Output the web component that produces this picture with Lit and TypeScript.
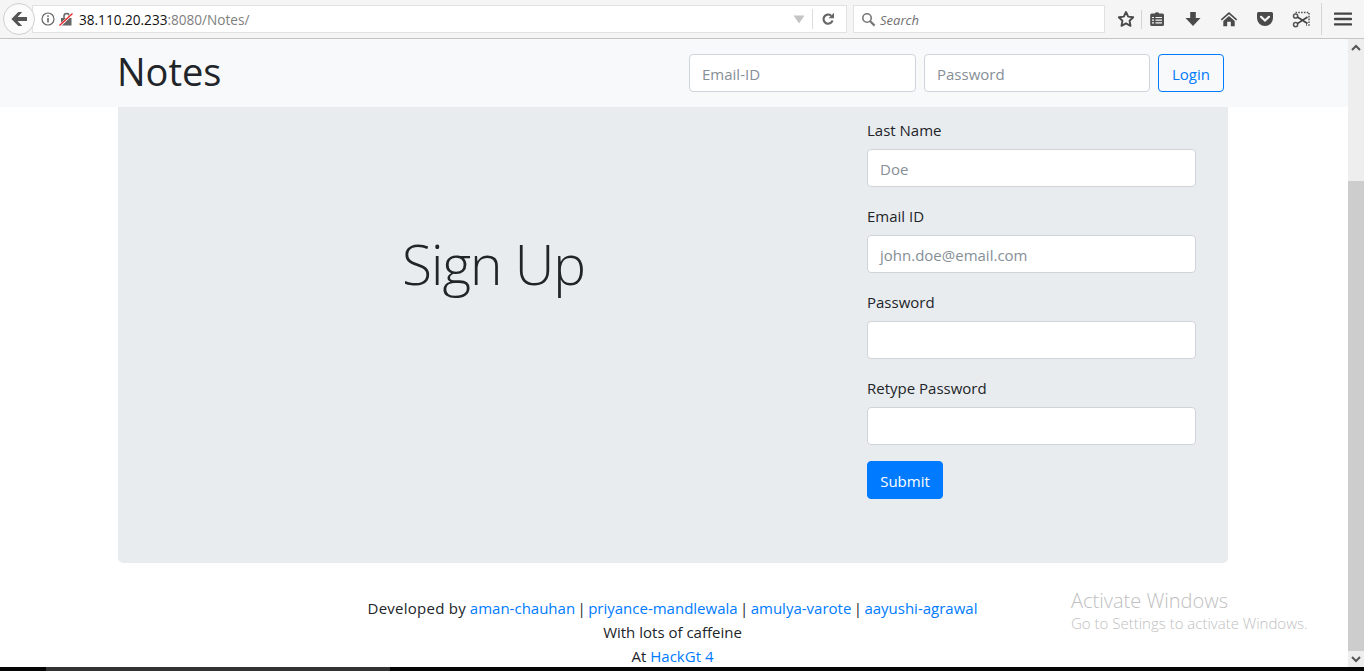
import { LitElement, html, css, svg } from "lit";
import { customElement } from "lit/decorators.js";

const ic = (w: number, h: number, body: unknown) => html`<svg width=${w} height=${h} viewBox="0 0 ${w} ${h}">${body}</svg>`;

@customElement("app-root")
export class AppRoot extends LitElement {
  static styles = css`
    :host { display: flex; flex-direction: column; height: 671px; overflow: hidden; position: relative; background: #fff; color: #212529;
      font-family: "Open Sans", "Noto Sans", sans-serif; font-size: 15px; line-height: 24px; }
    * { box-sizing: border-box; }
    a { color: #007bff; text-decoration: none; }

    .toolbar { height: 39px; flex: none; background: #f5f5f5; border-bottom: 1px solid #c4c4c4; display: flex; align-items: center; padding-left: 3px; }
    .back { width: 32px; height: 32px; border-radius: 50%; background: #fbfbfb; border: 1px solid #cfcfcf; display: flex; align-items: center; justify-content: center; flex: none; position: relative; z-index: 1; }
    .urlbar { margin-left: -3px; width: 815px; height: 28px; background: #fff; border: 1px solid #e1e1e1; display: flex; align-items: center; padding-left: 8px; flex: none; }
    .lock { margin-left: 4px; display: flex; flex: none; }
    .url { margin-left: 6px; padding-top: 2px; font-size: 13.6px; color: #808080; flex: 1; white-space: nowrap; }
    .url b { font-weight: 400; color: #111; }
    .urlend { display: flex; align-items: center; flex: none; }
    .vsep { width: 1px; height: 20px; background: #dcdcdc; margin: 0 8px 0 7px; }
    .urlend svg:last-child { margin-right: 11px; }
    .search { margin-left: 6px; width: 252px; height: 28px; background: #fff; border: 1px solid #e1e1e1; display: flex; align-items: center; padding-left: 7px; gap: 4px; flex: none; font-style: italic; font-size: 13px; color: #6f6f6f; }
    .search span { padding-top: 2px; }
    .tools { display: flex; align-items: center; margin-left: 11px; flex: none; }
    .tool { width: 36px; display: flex; justify-content: center; align-items: center; flex: none; }
    .tool.star { width: 20px; }
    .sep { width: 1px; height: 19px; background: #d4d4d4; margin-left: 5px; margin-right: -3px; flex: none; }
    .sep.tall { height: 32px; margin-left: 2px; margin-right: 3px; }

    .viewport { flex: 1; min-height: 0; display: flex; }
    .page { flex: 1; min-width: 0; display: flex; flex-direction: column; position: relative; }

    .navbar { height: 68px; flex: none; background: #f8f9fa; display: flex; align-items: center; justify-content: space-between; padding: 0 124px 0 117px; }
    .brand { font-size: 38px; line-height: 46px; padding-bottom: 4px; color: #212529; }
    .login { display: flex; gap: 8px; }
    .login .field:nth-child(1) { width: 227px; }
    .login .field:nth-child(2) { width: 226px; }
    .field { display: block; height: 38px; padding: 0 12px; background: #fff; border: 1px solid #ced4da; border-radius: 4px; line-height: 38px; color: #868e96; font-size: 15px; white-space: nowrap; }
    .btn { height: 38px; border: 1px solid #007bff; border-radius: 4px; line-height: 38px; padding-top: 2px; font-size: 15px; display: flex; align-items: center; justify-content: center; }
    .btn.outline { color: #007bff; width: 66px; }
    .btn.solid { color: #fff; background: #007bff; width: 76px; }

    .jumbo { margin: 0 120px 0 118px; height: 456px; flex: none; background: #e9ecef; border-radius: 0 0 5px 5px; display: flex; padding: 10px 32px 0 0; }
    .title { width: 749px; flex: none; display: flex; justify-content: center; padding: 105px 0 0 2px; font-size: 55px; letter-spacing: -1px; font-weight: 300; line-height: 84px; color: #212529; }
    .form { width: 329px; flex: none; display: flex; flex-direction: column; gap: 16px; }
    .group { display: flex; flex-direction: column; gap: 8px; }
    .group label { display: block; height: 24px; padding-top: 1px; }

    .footer { margin-top: 33px; text-align: center; padding-right: 3px; }
    .footer div { height: 24px; white-space: nowrap; }
    .dev { letter-spacing: 0.25px; }
    .bar { margin: 0 -1.5px; }

    .wm { position: absolute; left: 1071px; top: 550px; color: #c0c0c0; font-weight: 300; }
    .wm div:first-child { font-size: 20px; line-height: 24px; }
    .wm div:last-child { font-size: 15px; line-height: 20px; }

    .scroll { width: 16px; flex: none; background: #eeeeee; display: flex; flex-direction: column; align-items: center; }
    .arrow { height: 16px; flex: none; display: flex; align-items: center; justify-content: center; }
    .gap { height: 126px; flex: none; }
    .thumb { flex: 1; width: 100%; background: #cdcdcd; }

    .taskbar { height: 4px; flex: none; background: #050505; }
    .taskbar div { margin-left: 46px; width: 344px; height: 100%; background: #333; }
  `;

  private toolbar() {
    return html`<div class="toolbar">
      <div class="back">${ic(18, 18, svg`<path d="M8.3 2 1.4 9l6.9 7h3.9L7.6 11H17V7H7.6l4.6-5z" fill="#555"/>`)}</div>
      <div class="urlbar">
        ${ic(14, 14, svg`<circle cx="7" cy="7" r="6" fill="none" stroke="#666" stroke-width="1.2"/><rect x="6.2" y="6" width="1.6" height="4.5" fill="#666"/><rect x="6.2" y="3.3" width="1.6" height="1.6" fill="#666"/>`)}
        <span class="lock">${ic(14, 14, svg`<path d="M5 6V4a2.6 2.6 0 0 1 5.2 0v2" fill="none" stroke="#666" stroke-width="1.5"/><rect x="2" y="6" width="10.5" height="7.5" fill="#666"/><path d="M0.5 14 13.5 1.5" stroke="#fff" stroke-width="2.6"/><path d="M0.5 13.5 13.5 1.5" stroke="#e22" stroke-width="1.3"/>`)}</span>
        <span class="url"><b>38.110.20.233</b>:8080/Notes/</span>
        <div class="urlend">
          ${ic(12, 9, svg`<path d="M0.5 0.5h11L6 8.5z" fill="#c4c4c4"/>`)}
          <span class="vsep"></span>
          ${ic(14, 14, svg`<path d="M11.5 8.5a4.6 4.6 0 1 1-1.3-4.8" fill="none" stroke="#666" stroke-width="2.2"/><path d="M7.5 6.2h5.5V.8z" fill="#666"/>`)}
        </div>
      </div>
      <div class="search">
        ${ic(15, 15, svg`<circle cx="6" cy="6" r="4.2" fill="none" stroke="#777" stroke-width="1.6"/><path d="M9.2 9.2 13.6 13.6" stroke="#777" stroke-width="2.2"/>`)}
        <span>Search</span>
      </div>
      <div class="tools">
        <span class="tool star">${ic(18, 18, svg`<path d="M9 2l2.2 4.6 5 .7-3.6 3.5.9 5L9 13.4l-4.5 2.4.9-5L1.8 7.3l5-.7z" fill="none" stroke="#4a4a4a" stroke-width="1.9" stroke-linejoin="round"/>`)}</span>
        <span class="sep"></span>
        <span class="tool">${ic(16, 16, svg`<path d="M2.5 2.5h3.2a2.4 1.8 0 0 1 4.6 0h3.2a1.5 1.5 0 0 1 1.5 1.5v9.5a1.5 1.5 0 0 1-1.5 1.5h-10.8a1.5 1.5 0 0 1-1.5-1.5V4a1.5 1.5 0 0 1 1.5-1.5z" fill="#4f4f4f"/><path d="M3 6.5h2M6.5 6.5h6.5M3 9.2h2M6.5 9.2h6.5M3 11.9h2M6.5 11.9h6.5" stroke="#f5f5f5" stroke-width="1.2"/>`)}</span>
        <span class="tool">${ic(16, 16, svg`<path d="M5.2 1h5.6v6h4.7L8 15 .5 7h4.7z" fill="#4a4a4a"/>`)}</span>
        <span class="tool">${ic(18, 16, svg`<path d="M9 1 .8 8.3l1 1.2L9 3.2l7.2 6.3 1-1.2z" fill="#4a4a4a"/><path d="M9 5 3.3 10v5.2h3.9v-4.5h3.6v4.5h3.9V10z" fill="#4a4a4a"/>`)}</span>
        <span class="tool">${ic(18, 16, svg`<path d="M2.5 1h13A1.5 1.5 0 0 1 17 2.5V7a8 8 0 0 1-16 0V2.5A1.5 1.5 0 0 1 2.5 1z" fill="#4a4a4a"/><path d="M5 5.8 9 9.6l4-3.8" fill="none" stroke="#f5f5f5" stroke-width="2.2" stroke-linecap="round"/>`)}</span>
        <span class="tool">${ic(18, 18, svg`<path d="M3.5 2.5h13.5v12.5h-3" fill="none" stroke="#555" stroke-width="1.5" stroke-dasharray="1.6 1.2"/><circle cx="3.6" cy="6" r="2.1" fill="none" stroke="#555" stroke-width="1.5"/><circle cx="3.6" cy="14.6" r="2.1" fill="none" stroke="#555" stroke-width="1.5"/><path d="M5.4 7 15.5 13.5M5.4 13.6 15.5 7" stroke="#444" stroke-width="1.7"/>`)}</span>
        <span class="sep tall"></span>
        <span class="tool">${ic(18, 14, svg`<path d="M1 1.6h16M1 7h16M1 12.4h16" stroke="#444" stroke-width="2.4" stroke-linecap="round"/>`)}</span>
      </div>
    </div>`;
  }

  private group(label: string, ph = "") {
    return html`<div class="group"><label>${label}</label><span class="field">${ph}</span></div>`;
  }

  render() {
    return html`
      ${this.toolbar()}
      <div class="viewport">
        <div class="page">
          <nav class="navbar">
            <span class="brand">Notes</span>
            <div class="login">
              <span class="field">Email-ID</span>
              <span class="field">Password</span>
              <span class="btn outline">Login</span>
            </div>
          </nav>
          <section class="jumbo">
            <div class="title">Sign Up</div>
            <div class="form">
              ${this.group("Last Name", "Doe")}
              ${this.group("Email ID", "john.doe@email.com")}
              ${this.group("Password")}
              ${this.group("Retype Password")}
              <div><span class="btn solid">Submit</span></div>
            </div>
          </section>
          <footer class="footer">
            <div><span class="dev">Developed by</span> <a href="#">aman-chauhan</a> <span class="bar">|</span> <a href="#">priyance-mandlewala</a> <span class="bar">|</span> <a href="#">amulya-varote</a> <span class="bar">|</span> <a href="#">aayushi-agrawal</a></div>
            <div>With lots of caffeine</div>
            <div>At <a href="#">HackGt 4</a></div>
          </footer>
          <div class="wm"><div>Activate Windows</div><div>Go to Settings to activate Windows.</div></div>
        </div>
        <div class="scroll">
          <div class="arrow">${ic(10, 7, svg`<path d="M1 6 5 2l4 4" fill="none" stroke="#555" stroke-width="2"/>`)}</div>
          <div class="gap"></div>
          <div class="thumb"></div>
          <div class="arrow">${ic(10, 7, svg`<path d="M1 1l4 4 4-4" fill="none" stroke="#555" stroke-width="2"/>`)}</div>
        </div>
      </div>
      <div class="taskbar"><div></div></div>
    `;
  }
}
